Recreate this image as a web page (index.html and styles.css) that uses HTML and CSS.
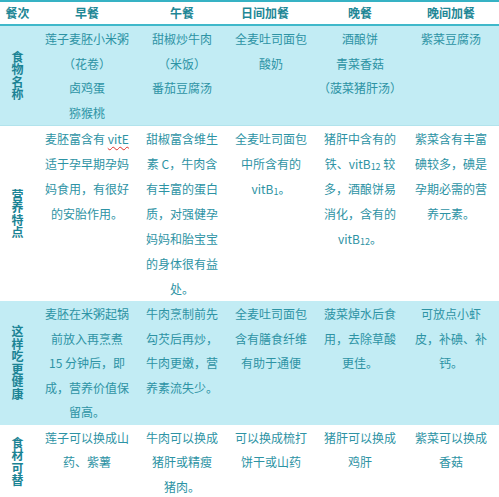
FILE: index.html
```html
<!DOCTYPE html>
<html lang="zh">
<head>
<meta charset="utf-8">
<link rel="stylesheet" href="styles.css">
</head>
<body>
<table class="menu">
  <colgroup>
    <col class="c-label"><col class="c-b"><col class="c-l"><col class="c-s1"><col class="c-d"><col class="c-s2">
  </colgroup>
  <thead>
    <tr class="head">
      <th>餐次</th><th>早餐</th><th>午餐</th><th class="h-snack">日间加餐</th><th>晚餐</th><th>晚间加餐</th>
    </tr>
  </thead>
  <tbody>
    <tr class="row blue r1">
      <th class="label"><span>食物名称</span></th>
      <td>莲子麦胚小米粥<br>（花卷）<br>卤鸡蛋<br>猕猴桃</td>
      <td>甜椒炒牛肉<br>（米饭）<br>番茄豆腐汤</td>
      <td>全麦吐司面包<br>酸奶</td>
      <td>酒酿饼<br>青菜香菇<br>（菠菜猪肝汤）</td>
      <td>紫菜豆腐汤</td>
    </tr>
    <tr class="row white r2">
      <th class="label"><span>营养特点</span></th>
      <td>麦胚富含有 <span class="spell">vitE</span><br>适于孕早期孕妈<br>妈食用，有很好<br>的安胎作用。</td>
      <td>甜椒富含维生<br>素 C，牛肉含<br>有丰富的蛋白<br>质，对强健孕<br>妈妈和胎宝宝<br>的身体很有益<br>处。</td>
      <td>全麦吐司面包<br>中所含有的<br>vitB<span class="sub">1</span>。</td>
      <td>猪肝中含有的<br>铁、vitB<span class="sub">12</span> 较<br>多，酒酿饼易<br>消化，含有的<br>vitB<span class="sub">12</span>。</td>
      <td>紫菜含有丰富<br>碘较多，碘是<br>孕期必需的营<br>养元素。</td>
    </tr>
    <tr class="row blue r3">
      <th class="label"><span>这样吃更健康</span></th>
      <td>麦胚在米粥起锅<br>前放入再烹煮<br>15 分钟后，即<br>成，营养价值保<br>留高。</td>
      <td>牛肉烹制前先<br>勾芡后再炒，<br>牛肉更嫩，营<br>养素流失少。</td>
      <td>全麦吐司面包<br>含有膳食纤维<br>有助于通便</td>
      <td>菠菜焯水后食<br>用，去除草酸<br>更佳。</td>
      <td>可放点小虾<br>皮，补碘、补<br>钙。</td>
    </tr>
    <tr class="row white r4">
      <th class="label"><span>食材可替</span></th>
      <td>莲子可以换成山<br>药、紫薯</td>
      <td>牛肉可以换成<br>猪肝或精瘦<br>猪肉。</td>
      <td>可以换成梳打<br>饼干或山药</td>
      <td>猪肝可以换成<br>鸡肝</td>
      <td>紫菜可以换成<br>香菇</td>
    </tr>
  </tbody>
</table>
</body>
</html>
```

FILE: styles.css
```css
html, body {
  margin: 0;
  padding: 0;
  background: #ffffff;
}

.menu {
  width: 499px;
  border-collapse: collapse;
  table-layout: fixed;
  font-family: "Noto Sans CJK SC", "Noto Sans", sans-serif;
  font-size: 12px;
  color: #2d93a4;
  border-top: 2px solid #36b2c4;
  border-bottom: 2px solid #36b2c4;
}

.c-label { width: 35px; }
.c-b { width: 104px; }
.c-l { width: 86px; }
.c-s1 { width: 92px; }
.c-d { width: 86px; }
.c-s2 { width: 96px; }

.head th {
  height: 22px;
  padding: 0;
  font-weight: bold;
  color: #1f8796;
  text-align: center;
  vertical-align: middle;
  border-bottom: 2px solid #3fb8ca;
  line-height: 22px;
}

.head .h-snack {
  padding-right: 12px;
}

.row td {
  padding: 1px 0 0 0;
  text-align: center;
  vertical-align: top;
  line-height: 24.5px;
  white-space: nowrap;
}

.blue { background: #c2ecf4; }
.white { background: #ffffff; }

.r1 { height: 96px; }
.r2 { height: 175px; }
.r2 td { line-height: 25px; padding-top: 0; }
.r3 { height: 123px; }
.r4 { height: 72px; }

.r1 { border-bottom: 1px solid #b2e3ec; }

.label {
  padding: 0;
  vertical-align: middle;
  text-align: center;
}

.label span {
  display: block;
  width: 12px;
  margin: 0 auto;
  font-size: 12px;
  line-height: 12.5px;
  font-weight: bold;
  color: #1a8394;
  word-break: break-all;
}

.spell {
  text-decoration: underline wavy #e0302a;
  text-decoration-thickness: 1px;
  text-underline-offset: 2px;
}

.sub {
  font-size: 9px;
  vertical-align: -1px;
  line-height: 0;
}
```
